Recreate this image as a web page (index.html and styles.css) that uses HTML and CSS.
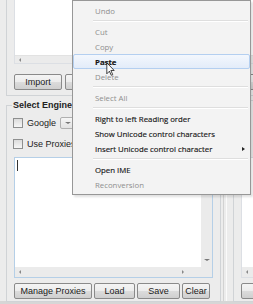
FILE: index.html
```html
<!DOCTYPE html>
<html lang="en-US">
<head>
<meta charset="utf-8">
<link rel="stylesheet" href="styles.css">
</head>
<body>

<div class="window">
  <div class="column">
    <div class="group top-group">
      <div class="textbox small-box">
        <div class="text-area"></div>
        <div class="hscroll"><span class="arrow-left"></span></div>
      </div>
      <div class="button-row">
        <button class="btn import">Import</button>
        <button class="btn export"></button>
      </div>
    </div>
    <fieldset class="engines">
      <legend>Select Engines</legend>
      <div class="option first">
        <span class="check"></span>Google
        <span class="combo"><span class="arrow-down"></span></span>
      </div>
      <div class="option">
        <span class="check"></span>Use Proxies
      </div>
      <div class="textbox big-box focused">
        <div class="text-area"><span class="caret"></span></div>
        <div class="vscroll"><span class="arrow-down"></span></div>
        <div class="hscroll"><span class="arrow-left"></span><span class="arrow-right"></span></div>
        <div class="corner"></div>
      </div>
      <div class="button-row">
        <button class="btn manage">Manage Proxies</button>
        <button class="btn load">Load</button>
        <button class="btn save">Save</button>
        <button class="btn clear">Clear</button>
      </div>
    </fieldset>
  </div>

  <div class="splitter"></div>

  <div class="column">
    <div class="group top-group">
      <div class="textbox small-box">
        <div class="text-area"></div>
        <div class="hscroll"><span class="arrow-left"></span></div>
      </div>
      <div class="button-row">
        <button class="btn import"></button>
      </div>
    </div>
    <fieldset class="engines">
      <div class="spacer"></div>
      <div class="textbox big-box">
        <div class="text-area"></div>
        <div class="vscroll"><span class="arrow-down"></span></div>
        <div class="hscroll"><span class="arrow-left"></span><span class="arrow-right"></span></div>
        <div class="corner"></div>
      </div>
      <div class="button-row">
        <button class="btn manage">Check</button>
      </div>
    </fieldset>
  </div>
</div>

<div class="context-menu">
  <div class="item disabled">Undo</div>
  <div class="separator"></div>
  <div class="item disabled">Cut</div>
  <div class="item disabled">Copy</div>
  <div class="item hover">Paste</div>
  <div class="item disabled">Delete</div>
  <div class="separator"></div>
  <div class="item disabled">Select All</div>
  <div class="separator"></div>
  <div class="item">Right to left Reading order</div>
  <div class="item">Show Unicode control characters</div>
  <div class="item">Insert Unicode control character<span class="submenu"></span></div>
  <div class="separator"></div>
  <div class="item">Open IME</div>
  <div class="item disabled">Reconversion</div>
</div>

<svg class="cursor" width="9" height="14" viewBox="0 0 12 19">
  <path d="M1 1 L1 16 L4.5 12.5 L7 18 L9 17 L6.5 11.5 L11 11.5 Z" fill="#fff" stroke="#000" stroke-width="1"/>
</svg>

</body>
</html>
```

FILE: styles.css
```css
body {
    margin: 0;
    height: 304px;
    overflow: hidden;
    background-color: #ececec;
    font-family: "Liberation Sans", Arial, sans-serif;
    font-size: 9px;
    color: #1e1e1e;
}

.window {
    display: flex;
    width: 480px;
    height: 301px;
    border-bottom: 3px solid #d6d6d6;
}
.column {
    flex: none;
    width: 215px;
    margin-left: 6px;
    display: flex;
    flex-direction: column;
}
.splitter {
    flex: none;
    width: 2px;
    margin-left: 2px;
    border-left: 1px solid #d2d2d2;
    border-right: 1px solid #fafafa;
}

/* group boxes */
.top-group {
    border: 1px solid #d0d3d6;
    border-top: none;
    padding: 0 7px 5px 7px;
}
.engines {
    margin: 4px 0 0 0;
    padding: 0 7px 2px 7px;
    border: 1px solid #d0d3d6;
    min-width: 0;
    flex: 1;
}
.engines legend {
    font-weight: bold;
    line-height: 11px;
    padding: 0 1px;
    margin-left: -2px;
    color: #222;
}
.spacer {
    height: 48px;
}

/* text boxes */
.textbox {
    background-color: #ffffff;
    border: 1px solid #dcdfe4;
    display: grid;
}
.small-box {
    height: 63px;
    margin-top: -1px;
    grid-template-rows: 1fr 8px;
}
.big-box {
    height: 121px;
    box-sizing: border-box;
    margin-top: 8px;
    grid-template-columns: 1fr 11px;
    grid-template-rows: 1fr 10px;
}
.focused {
    border-color: #b5cfe7;
}
.caret {
    display: block;
    width: 1px;
    height: 11px;
    margin: 2px 0 0 2px;
    background-color: #333;
}
.hscroll, .vscroll, .corner {
    background-color: #ebebeb;
    display: flex;
    align-items: center;
}
.hscroll {
    justify-content: space-between;
    padding: 0 17px 0 4px;
}
.small-box .hscroll {
    border-top: 1px solid #e2e2e2;
}
.vscroll {
    flex-direction: column;
    justify-content: flex-end;
    padding-bottom: 6px;
}
.arrow-left {
    width: 0;
    height: 0;
    border-top: 2px solid transparent;
    border-bottom: 2px solid transparent;
    border-right: 2px solid #888;
}
.arrow-right {
    width: 0;
    height: 0;
    border-top: 2px solid transparent;
    border-bottom: 2px solid transparent;
    border-left: 2px solid #888;
}
.arrow-down {
    width: 0;
    height: 0;
    border-left: 3px solid transparent;
    border-right: 3px solid transparent;
    border-top: 2px solid #777;
}

/* options */
.option {
    display: flex;
    align-items: center;
    height: 11px;
    margin-top: 10px;
    white-space: nowrap;
    color: #222;
}
.option.first {
    margin-top: 6px;
}
.check {
    width: 8px;
    height: 8px;
    margin: 0 4px 0 -1px;
    border: 1px solid #8e8f8f;
    background: linear-gradient(#dcdcdc, #f6f6f6);
}
.combo {
    display: flex;
    align-items: center;
    width: 40px;
    height: 10px;
    margin-left: 4px;
    padding-left: 4px;
    border: 1px solid #b0b0b0;
    border-radius: 2px;
    background: linear-gradient(#f6f6f6, #e2e2e2);
}

/* buttons */
.button-row {
    display: flex;
    gap: 2px;
    margin-top: 10px;
}
.engines .button-row {
    margin-top: 5px;
}
.btn {
    height: 16px;
    padding: 0;
    font-family: "Liberation Sans", Arial, sans-serif;
    font-size: 9px;
    color: #1a1a1a;
    border: 1px solid #8a8a8a;
    border-radius: 2px;
    background: linear-gradient(#f4f4f4 0%, #ececec 50%, #dcdcdc 51%, #cfcfcf 100%);
}
.import { width: 48px; }
.export { width: 48px; margin-left: 1px; }
.manage { width: 78px; }
.load { width: 41px; }
.save { width: 43px; }
.clear { width: 28px; }

/* context menu */
.context-menu {
    position: absolute;
    left: 72px;
    top: 0;
    width: 177px;
    padding: 2px 0 2px 0;
    border: 1px solid #979797;
    background-color: #f3f3f3;
    box-shadow: 2px 2px 2px rgba(0, 0, 0, 0.12);
    font-family: "Open Sans", "Noto Sans", sans-serif;
    font-size: 7.8px;
    color: #151515;
    -webkit-text-stroke: 0.15px #151515;
}
.item {
    display: flex;
    align-items: center;
    height: 15px;
    box-sizing: border-box;
    padding-left: 22px;
    white-space: nowrap;
}
.item.disabled {
    color: #8e8e8e;
    -webkit-text-stroke: 0;
}
.item.hover {
    border: 1px solid #b4cff0;
    border-radius: 2px;
    padding-left: 21px;
    background: linear-gradient(#f3f7fd, #e3ecf9);
    font-weight: bold;
}
.separator {
    height: 6px;
    margin-left: 20px;
    margin-right: 2px;
    background: linear-gradient(transparent 2px, #dedede 2px, #dedede 3px, #ffffff 3px, #ffffff 4px, transparent 4px);
}
.submenu {
    margin-left: auto;
    margin-right: 5px;
    width: 0;
    height: 0;
    border-top: 2.5px solid transparent;
    border-bottom: 2.5px solid transparent;
    border-left: 3px solid #222;
}

.cursor {
    position: absolute;
    left: 106px;
    top: 62px;
}
```
